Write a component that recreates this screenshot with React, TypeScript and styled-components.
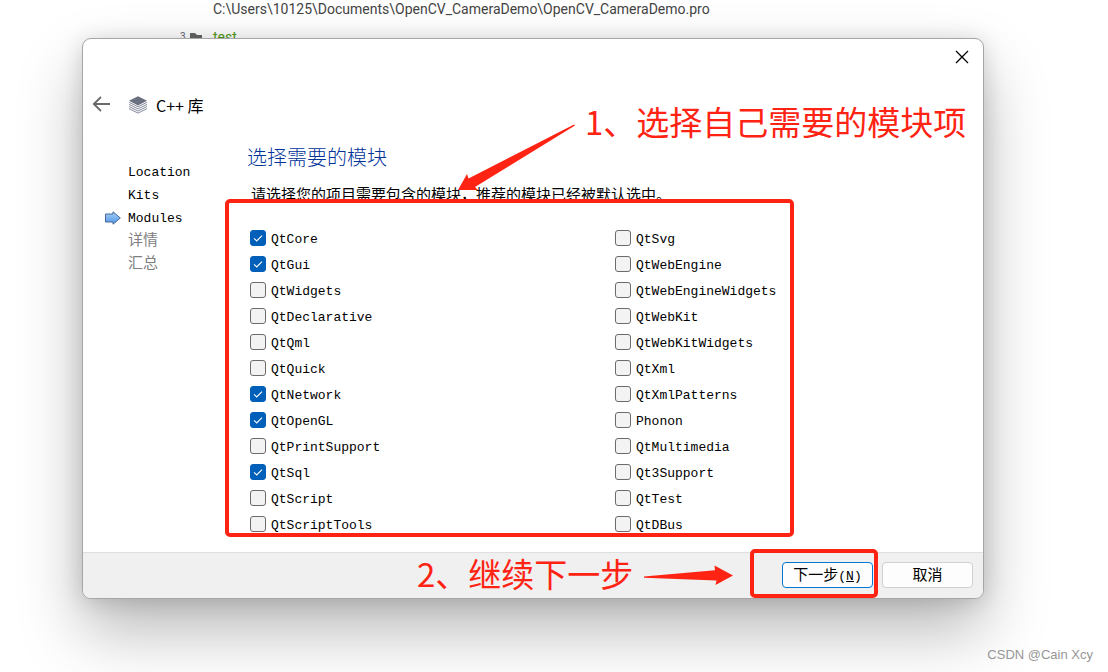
import React, { useState } from "react";
import styled, { createGlobalStyle } from "styled-components";

const red = "#ff2314";
const sans = `"Noto Sans CJK SC", "Noto Sans", sans-serif`;
const mono = `"Liberation Mono", "Noto Sans CJK SC", monospace`;

const GlobalStyle = createGlobalStyle`
  * { box-sizing: border-box; }
  body { margin: 0; background: #fff; color: #000; font-family: ${mono}; }
  h1, h2, p, ul, ol { margin: 0; padding: 0; font-weight: 400; }
  ul, ol { list-style: none; }
  button { font: inherit; color: inherit; }
`;

const Desktop = styled.main`
  position: relative;
  min-height: 100vh;
  overflow: hidden;
  padding-bottom: 73px;
`;

const ProjectList = styled.div`
  height: 38px;
  padding-left: 180px;
  font: 14px/18px Roboto, "Noto Sans", sans-serif;
`;

const ProjectPath = styled.p`
  padding-left: 33px;
  color: #444;
`;

const ProjectRow = styled.div`
  display: flex;
  align-items: flex-start;
  margin-top: 10px;
`;

const ProjectIndex = styled.span`
  width: 9px;
  padding-top: 2px;
  font-size: 10px;
  line-height: 14px;
  color: #667;
`;

const FolderIcon = styled.svg`
  width: 14px;
  height: 12px;
  margin: 4px 10px 0 0;
`;

const ProjectName = styled.span`
  color: #4f9a12;
`;

const Dialog = styled.section`
  position: relative;
  margin: 0 124px 0 82px;
  border: 1px solid #a6a6a6;
  border-radius: 9px;
  background: #fff;
  box-shadow: 0 32px 64px rgba(0, 0, 0, 0.28), 0 2px 21px rgba(0, 0, 0, 0.15);
`;

const TitleBar = styled.div`
  display: flex;
  align-items: center;
  justify-content: flex-end;
  height: 36px;
  padding-right: 14px;
`;

const IconButton = styled.button`
  display: flex;
  padding: 0;
  border: 0;
  background: none;
`;

const Header = styled.header`
  display: flex;
  align-items: center;
  height: 60px;
  padding-left: 9px;
`;

const LibraryIcon = styled.svg`
  width: 20px;
  height: 18px;
  margin: 0 8px 0 17px;
`;

const Title = styled.h1`
  font: 16px/22px ${sans};
`;

const Body = styled.div`
  display: flex;
`;

const Steps = styled.ol`
  flex: 0 0 142px;
  padding: 26px 0 0 22px;
`;

const Step = styled.li<{ $pending?: boolean }>`
  display: grid;
  grid-template-columns: 16px 1fr;
  column-gap: 7px;
  align-items: center;
  height: 23px;
  font-size: ${(p) => (p.$pending ? 15 : 13)}px;
  line-height: 19px;
  color: ${(p) => (p.$pending ? "#808080" : "#000")};
`;

const StepMarker = styled.svg`
  width: 16px;
  height: 16px;
`;

const StepLabel = styled.span`
  grid-column: 2;
`;

const Content = styled.div`
  flex: 1;
  min-width: 0;
  padding: 8px 189px 15px 0;
`;

const Heading = styled.h2`
  padding-left: 22px;
  font: 300 20px/28px ${sans};
  color: #003399;
`;

const Description = styled.p`
  margin-top: 12px;
  padding-left: 26px;
  font: 15px/22px ${sans};
  white-space: nowrap;
`;

const ModulePanel = styled.div`
  position: relative;
  display: grid;
  grid-template-columns: 1fr 165px;
  max-height: 338px;
  margin-top: -6px;
  padding: 23px 10px 0 21px;
  overflow: hidden;
  border: 4px solid ${red};
  border-radius: 5px;
  background: #fff;
`;

const ModuleLabel = styled.label`
  position: relative;
  display: flex;
  align-items: flex-start;
  gap: 5px;
  height: 26px;
  padding-top: 4px;
  font-size: 13px;
  line-height: 20px;
  white-space: nowrap;
`;

const CheckBox = styled.input`
  appearance: none;
  width: 16px;
  height: 16px;
  margin: 0;
  border: 1px solid #6b6b6b;
  border-radius: 3px;
  background: #f3f3f3;
  &:checked {
    border-color: #005fb8;
    background: #005fb8;
  }
`;

const CheckMark = styled.svg`
  position: absolute;
  left: 0;
  top: 4px;
  width: 16px;
  height: 16px;
  pointer-events: none;
`;

const Footer = styled.footer`
  position: relative;
  display: flex;
  justify-content: flex-end;
  gap: 9px;
  padding: 9px 10px 10px;
  border-top: 1px solid #dfdfdf;
  border-radius: 0 0 8px 8px;
  background: #f0f0f0;
`;

const PushButton = styled.button<{ $primary?: boolean }>`
  width: 91px;
  height: 26px;
  padding: 3px 0 0;
  border: 1px solid ${(p) => (p.$primary ? "#0078d4" : "#d0d0d0")};
  border-radius: 4px;
  background: #fdfdfd;
  font: 15px/20px "Liberation Mono", ${sans};
`;

const Mnemonic = styled.span`
  font-size: 13px;
`;

const Marked = styled.div`
  position: relative;
  &::after {
    content: "";
    position: absolute;
    inset: -13px -5px -10px -32px;
    border: 4px solid ${red};
    border-radius: 5px;
    pointer-events: none;
  }
`;

const Note = styled.p<{ $left: number; $top: number }>`
  position: absolute;
  left: ${(p) => p.$left}px;
  top: ${(p) => p.$top}px;
  font: 33px/48px ${sans};
  color: ${red};
  white-space: nowrap;
`;

const NoteArrow = styled.svg<{ $left: number; $top: number }>`
  position: absolute;
  left: ${(p) => p.$left}px;
  top: ${(p) => p.$top}px;
  fill: ${red};
  pointer-events: none;
`;

const Watermark = styled.p`
  position: absolute;
  right: 15px;
  bottom: 8px;
  font: 13px/18px "Liberation Sans", Arial, sans-serif;
  color: #969696;
`;

const columns = [
  ["QtCore", "QtGui", "QtWidgets", "QtDeclarative", "QtQml", "QtQuick", "QtNetwork", "QtOpenGL", "QtPrintSupport", "QtSql", "QtScript", "QtScriptTools"],
  ["QtSvg", "QtWebEngine", "QtWebEngineWidgets", "QtWebKit", "QtWebKitWidgets", "QtXml", "QtXmlPatterns", "Phonon", "QtMultimedia", "Qt3Support", "QtTest", "QtDBus"],
];

const steps = [
  { label: "Location" },
  { label: "Kits" },
  { label: "Modules", current: true },
  { label: "详情", pending: true },
  { label: "汇总", pending: true },
];

function Module({ name, initial }: { name: string; initial: boolean }) {
  const [checked, setChecked] = useState(initial);
  return (
    <ModuleLabel>
      <CheckBox type="checkbox" checked={checked} onChange={() => setChecked(!checked)} />
      {checked && (
        <CheckMark viewBox="0 0 16 16" fill="none" stroke="#fff" strokeWidth="1.1">
          <path d="M4 8.3 L6.7 11 L12 5.6" />
        </CheckMark>
      )}
      {name}
    </ModuleLabel>
  );
}

export default function App() {
  const defaults = ["QtCore", "QtGui", "QtNetwork", "QtOpenGL", "QtSql"];
  return (
    <Desktop>
      <GlobalStyle />
      <ProjectList>
        <ProjectPath>C:\Users\10125\Documents\OpenCV_CameraDemo\OpenCV_CameraDemo.pro</ProjectPath>
        <ProjectRow>
          <ProjectIndex>3</ProjectIndex>
          <FolderIcon viewBox="0 0 14 12">
            <path d="M1 1h5l2 2h5v8H1z" fill="#666" />
          </FolderIcon>
          <ProjectName>test</ProjectName>
        </ProjectRow>
      </ProjectList>

      <Dialog role="dialog" aria-labelledby="wizard-title">
        <TitleBar>
          <IconButton aria-label="关闭">
            <svg width="14" height="14" viewBox="0 0 14 14" stroke="#000" strokeWidth="1.3">
              <path d="M1 1 L13 13 M13 1 L1 13" />
            </svg>
          </IconButton>
        </TitleBar>

        <Header>
          <IconButton aria-label="返回">
            <svg width="19" height="18" viewBox="0 0 19 18" fill="none" stroke="#6a6a6a">
              <path d="M18 8 H2" strokeWidth="2" />
              <path d="M9 1 L1.8 8 L9 15" strokeWidth="1.8" />
            </svg>
          </IconButton>
          <LibraryIcon viewBox="0 0 20 18">
            <path d="M10 0.3 L19 4.8 L10 9.4 L1 4.8Z" fill="#6b7080" />
            <g fill="none" stroke="#85899a" strokeWidth="1">
              <path d="M1 6.3 L10 10.8 L19 6.3" />
              <path d="M1 8.4 L10 12.9 L19 8.4" />
              <path d="M1 10.5 L10 15 L19 10.5" />
              <path d="M1 12.6 L10 17.1 L19 12.6" />
            </g>
          </LibraryIcon>
          <Title id="wizard-title">C++ 库</Title>
        </Header>

        <Body>
          <Steps>
            {steps.map((s) => (
              <Step key={s.label} $pending={s.pending} aria-current={s.current ? "step" : undefined}>
                {s.current && (
                  <StepMarker viewBox="0 0 16 16">
                    <defs>
                      <linearGradient id="marker" x1="0" y1="0" x2="0" y2="1">
                        <stop offset="0" stopColor="#a9d0f8" />
                        <stop offset="1" stopColor="#4f94e6" />
                      </linearGradient>
                    </defs>
                    <path d="M0.5 3 H8 V0.8 L15.3 7 L8 13.2 V11 H0.5Z" fill="url(#marker)" stroke="#48699b" />
                  </StepMarker>
                )}
                <StepLabel>{s.label}</StepLabel>
              </Step>
            ))}
          </Steps>

          <Content>
            <Heading>选择需要的模块</Heading>
            <Description>请选择您的项目需要包含的模块，推荐的模块已经被默认选中。</Description>
            <ModulePanel>
              {columns.map((names) => (
                <ul key={names[0]}>
                  {names.map((name) => (
                    <li key={name}>
                      <Module name={name} initial={defaults.includes(name)} />
                    </li>
                  ))}
                </ul>
              ))}
            </ModulePanel>
          </Content>
        </Body>

        <Footer>
          <Note $left={334} $top={-4}>2、继续下一步</Note>
          <NoteArrow $left={560} $top={11} width="92" height="22" viewBox="0 0 92 22">
            <path d="M1 12.6 L72 6.2 L71.5 1.5 L90 11.5 L72.5 21 L73.5 16.5 L1 13.8Z" />
          </NoteArrow>
          <Marked>
            <PushButton $primary>
              下一步<Mnemonic>(<u>N</u>)</Mnemonic>
            </PushButton>
          </Marked>
          <PushButton>取消</PushButton>
        </Footer>

        <Note $left={502} $top={58}>1、选择自己需要的模块项</Note>
        <NoteArrow $left={373} $top={84} width="122" height="70" viewBox="0 0 122 70">
          <path d="M2 67 L11 51 L12.5 55.5 L118 1.6 L119 2.6 L19 64 L22 67Z" />
        </NoteArrow>
      </Dialog>

      <Watermark>CSDN @Cain Xcy</Watermark>
    </Desktop>
  );
}
